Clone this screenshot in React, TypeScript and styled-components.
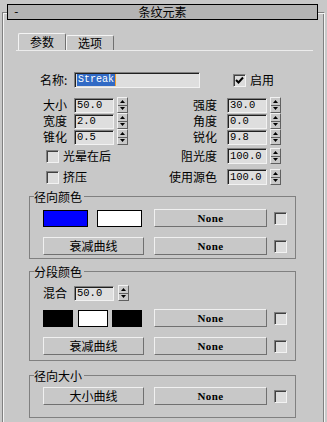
import React from 'react';
import styled, { createGlobalStyle } from 'styled-components';

const Global = createGlobalStyle`
  html, body { margin: 0; padding: 0; background: #c8c8c8; }
  body {
    font-family: "Noto Sans CJK SC", "Noto Sans", sans-serif;
    font-size: 12px;
    color: #000;
  }
  * { box-sizing: border-box; }
`;

const CJK = `"Noto Sans CJK SC", "Noto Sans", sans-serif`;
const MONO = `"Liberation Mono", "DejaVu Sans Mono", monospace`;
const SERIF = `"Liberation Serif", "DejaVu Serif", serif`;
const LINE = '#808080';

const Rollout = styled.div`
  margin: 12px 2px 0 2px;
  min-height: 410px;
  border-top: 1px solid #808080;
  border-left: 1px solid #808080;
  border-right: 1px solid #f4f4f4;
  box-shadow: inset 1px 1px 0 #f4f4f4, inset -1px 0 0 #808080;
  display: flex;
  flex-direction: column;
`;

const TitleBar = styled.div`
  margin: -9px 6px 0 4px;
  height: 16px;
  background: #b4b4b4;
  border: 1px solid #000;
  display: grid;
  grid-template-columns: 1fr auto 1fr;
  align-items: center;
  font-size: 12px;
  line-height: 14px;
`;

const Collapse = styled.span`
  padding-left: 5px;
  font-family: ${MONO};
  font-size: 11px;
`;

const TabStrip = styled.div`
  margin: 13px 11px 0 13px;
  height: 18px;
  display: flex;
  align-items: flex-end;
  padding-left: 2px;
  border-bottom: 1px solid #ececec;
`;

const Tab = styled.div<{ $active?: boolean }>`
  width: 48px;
  height: ${(p) => (p.$active ? 17 : 15)}px;
  border: 1px solid;
  border-bottom: none;
  border-color: #f4f4f4 #707070 transparent #f4f4f4;
  border-radius: 2px 2px 0 0;
  display: flex;
  align-items: center;
  justify-content: center;
  font-size: 12px;
  line-height: 14px;
`;

const NameRow = styled.div`
  display: flex;
  align-items: center;
  height: 16px;
  margin-top: 21px;
  padding-left: 37px;
`;

const Label = styled.span<{ $w?: number; $ml?: number }>`
  display: inline-block;
  width: ${(p) => (p.$w ? `${p.$w}px` : 'auto')};
  margin-left: ${(p) => p.$ml ?? 0}px;
  font-size: 12px;
  line-height: 14px;
  white-space: nowrap;
`;

const Field = styled.div<{ $w: number; $h?: number }>`
  width: ${(p) => p.$w}px;
  height: ${(p) => p.$h ?? 15}px;
  background: #dedede;
  border: 1px solid;
  border-color: #808080 #f2f2f2 #f2f2f2 #808080;
  box-shadow: inset 1px 1px 0 #202020;
  padding-left: 2px;
  display: flex;
  align-items: center;
  font-family: ${MONO};
  font-size: 10.5px;
  line-height: 12px;
  overflow: hidden;
`;

const Selected = styled.span`
  background: #316ac5;
  color: #fff;
  padding: 0 1px;
  border-right: 1px solid #f0a030;
  font-size: 10px;
`;

const CheckBox = styled.div<{ $ml?: number }>`
  width: 13px;
  height: 13px;
  margin-left: ${(p) => p.$ml ?? 0}px;
  flex: none;
  background: #dcdcdc;
  border: 1px solid;
  border-color: #808080 #f2f2f2 #f2f2f2 #808080;
  box-shadow: inset 1px 1px 0 #404040;
  display: flex;
  align-items: center;
  justify-content: center;
`;

const SpinBox = styled.div<{ $ml?: number }>`
  width: 11px;
  height: 16px;
  margin-left: ${(p) => p.$ml ?? 0}px;
  flex: none;
  display: flex;
  flex-direction: column;
  background: #c8c8c8;
  border: 1px solid;
  border-color: #f2f2f2 #606060 #606060 #f2f2f2;
`;

const SpinHalf = styled.div<{ $down?: boolean }>`
  flex: 1;
  display: flex;
  align-items: center;
  justify-content: center;
  border-top: ${(p) => (p.$down ? '1px solid #606060' : 'none')};
`;

const FieldRow = styled.div<{ $mt: number }>`
  display: grid;
  grid-template-columns: 125px 99px 40px 14px;
  align-items: center;
  height: 16px;
  margin-top: ${(p) => p.$mt}px;
`;

const LeftSpin = styled.div`
  display: flex;
  align-items: center;
  padding-left: 40px;
`;

const LeftCheck = styled.div`
  display: flex;
  align-items: center;
  gap: 4px;
  padding-left: 43px;
`;

const RightLabel = styled.span`
  text-align: right;
  padding-right: 10px;
  font-size: 12px;
  line-height: 14px;
  white-space: nowrap;
`;

const EndCell = styled.div`
  justify-self: end;
`;

/* group box: header row draws the top edge around the caption */
const Group = styled.section<{ $mt: number }>`
  margin: ${(p) => p.$mt}px 28px 0 26px;
  display: flex;
  flex-direction: column;
`;

const GroupHeader = styled.div`
  height: 14px;
  display: flex;
  align-items: flex-end;
  &::before,
  &::after {
    content: '';
    height: 7px;
    border-top: 1px solid ${LINE};
  }
  &::before {
    width: 4px;
    border-left: 1px solid ${LINE};
  }
  &::after {
    flex: 1;
    border-right: 1px solid ${LINE};
  }
`;

const GroupTitle = styled.span`
  align-self: stretch;
  padding: 0 2px 0 0;
  font-size: 12px;
  line-height: 14px;
  white-space: nowrap;
`;

const GroupBody = styled.div<{ $pt: number; $pb: number }>`
  border: 1px solid ${LINE};
  border-top: none;
  padding: ${(p) => p.$pt}px 0 ${(p) => p.$pb}px 13px;
  display: flex;
  flex-direction: column;
`;

const CtrlRow = styled.div<{ $mt?: number }>`
  display: flex;
  align-items: center;
  height: 18px;
  margin-top: ${(p) => p.$mt ?? 0}px;
`;

const SmallRow = styled.div<{ $mt?: number }>`
  display: flex;
  align-items: center;
  height: 16px;
  margin-top: ${(p) => p.$mt ?? 0}px;
`;

const LeftCell = styled.div`
  width: 101px;
  height: 18px;
  display: flex;
  align-items: flex-end;
`;

const Swatches = styled.div`
  width: 99px;
  height: 17px;
  display: flex;
  justify-content: space-between;
`;

const Swatch = styled.div<{ $color: string; $w: number }>`
  width: ${(p) => p.$w}px;
  height: 17px;
  background: ${(p) => p.$color};
  border: 1px solid #000;
`;

const Button = styled.button<{ $w: number; $ml?: number; $none?: boolean }>`
  width: ${(p) => p.$w}px;
  height: 18px;
  margin: 0 0 0 ${(p) => p.$ml ?? 0}px;
  padding: 0;
  background: #c8c8c8;
  border: 1px solid;
  border-color: #f0f0f0 #707070 #707070 #f0f0f0;
  color: #000;
  display: flex;
  align-items: center;
  justify-content: center;
  font-family: ${(p) => (p.$none ? SERIF : CJK)};
  font-size: ${(p) => (p.$none ? 11 : 12)}px;
  font-weight: ${(p) => (p.$none ? 700 : 400)};
  letter-spacing: ${(p) => (p.$none ? '0.4px' : '0')};
  line-height: 14px;
`;

const Spinner = ({ ml }: { ml?: number }) => (
  <SpinBox $ml={ml}>
    <SpinHalf>
      <svg width="5" height="3" viewBox="0 0 5 3"><path d="M2.5 0 L5 3 L0 3 Z" fill="#000" /></svg>
    </SpinHalf>
    <SpinHalf $down>
      <svg width="5" height="3" viewBox="0 0 5 3"><path d="M0 0 L5 0 L2.5 3 Z" fill="#000" /></svg>
    </SpinHalf>
  </SpinBox>
);

const Check = ({ checked, ml }: { checked?: boolean; ml?: number }) => (
  <CheckBox $ml={ml}>
    {checked && (
      <svg width="9" height="9" viewBox="0 0 9 9">
        <path d="M1 4 L3.5 6.5 L8 1.5" stroke="#000" strokeWidth="2" fill="none" />
      </svg>
    )}
  </CheckBox>
);

const NoneRow = ({ left, mt }: { left: React.ReactNode; mt?: number }) => (
  <CtrlRow $mt={mt}>
    {left}
    <Button $w={113} $ml={10} $none>None</Button>
    <Check ml={7} />
  </CtrlRow>
);

const spinRows: [string, string, string, string][] = [
  ['大小', '50.0', '强度', '30.0'],
  ['宽度', '2.0', '角度', '0.0'],
  ['锥化', '0.5', '锐化', '9.8'],
];

const checkRows: [string, string, string][] = [
  ['光晕在后', '阻光度', '100.0'],
  ['挤压', '使用源色', '100.0'],
];

export default function App() {
  return (
    <>
      <Global />
      <Rollout>
        <TitleBar>
          <Collapse>-</Collapse>
          <span>条纹元素</span>
          <span />
        </TitleBar>
        <TabStrip>
          <Tab $active>参数</Tab>
          <Tab>选项</Tab>
        </TabStrip>

        <NameRow>
          <Label $w={34}>名称:</Label>
          <Field $w={126} $h={16}>
            <Selected>Streak</Selected>
          </Field>
          <Check checked ml={33} />
          <Label $ml={4}>启用</Label>
        </NameRow>

        {spinRows.map(([l, lv, r, rv], i) => (
          <FieldRow key={l} $mt={i === 0 ? 9 : 0}>
            <LeftSpin>
              <Label $w={31}>{l}</Label>
              <Field $w={40}>{lv}</Field>
              <Spinner ml={3} />
            </LeftSpin>
            <RightLabel>{r}</RightLabel>
            <Field $w={40}>{rv}</Field>
            <EndCell>
              <Spinner />
            </EndCell>
          </FieldRow>
        ))}

        {checkRows.map(([l, r, rv], i) => (
          <FieldRow key={l} $mt={i === 0 ? 3 : 5}>
            <LeftCheck>
              <Check />
              <Label>{l}</Label>
            </LeftCheck>
            <RightLabel>{r}</RightLabel>
            <Field $w={40} $h={16}>{rv}</Field>
            <EndCell>
              <Spinner />
            </EndCell>
          </FieldRow>
        ))}

        <Group $mt={5}>
          <GroupHeader>
            <GroupTitle>径向颜色</GroupTitle>
          </GroupHeader>
          <GroupBody $pt={5} $pb={3}>
            <NoneRow
              left={
                <LeftCell>
                  <Swatches>
                    <Swatch $color="#0000ff" $w={45} />
                    <Swatch $color="#ffffff" $w={45} />
                  </Swatches>
                </LeftCell>
              }
            />
            <NoneRow mt={10} left={<Button $w={101}>衰减曲线</Button>} />
          </GroupBody>
        </Group>

        <Group $mt={6}>
          <GroupHeader>
            <GroupTitle>分段颜色</GroupTitle>
          </GroupHeader>
          <GroupBody $pt={6} $pb={5}>
            <SmallRow>
              <Label $w={31}>混合</Label>
              <Field $w={40}>50.0</Field>
              <Spinner ml={4} />
            </SmallRow>
            <NoneRow
              mt={8}
              left={
                <LeftCell>
                  <Swatches>
                    <Swatch $color="#000000" $w={30} />
                    <Swatch $color="#ffffff" $w={30} />
                    <Swatch $color="#000000" $w={30} />
                  </Swatches>
                </LeftCell>
              }
            />
            <NoneRow mt={10} left={<Button $w={101}>衰减曲线</Button>} />
          </GroupBody>
        </Group>

        <Group $mt={8}>
          <GroupHeader>
            <GroupTitle>径向大小</GroupTitle>
          </GroupHeader>
          <GroupBody $pt={4} $pb={12}>
            <NoneRow left={<Button $w={101}>大小曲线</Button>} />
          </GroupBody>
        </Group>
      </Rollout>
    </>
  );
}
